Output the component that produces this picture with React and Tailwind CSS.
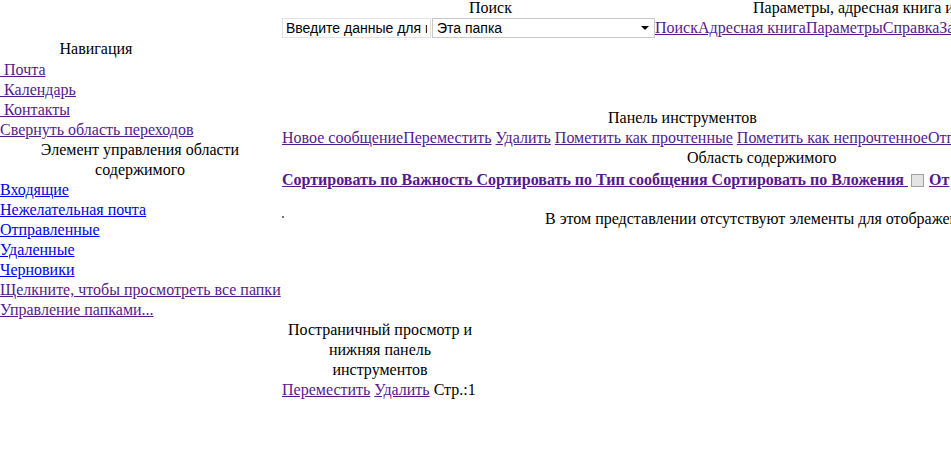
import React from 'react';

const visited = 'text-[#551a8b] underline';
const fresh = 'text-[#0000ee] underline';

function NavLink({ href = '#', cls = visited, children }) {
  return (
    <div>
      <a href={href} className={cls}>{children}</a>
    </div>
  );
}

export default function App() {
  return (
    <div className="w-[951px] h-[458px] overflow-hidden bg-white text-black font-['Liberation_Serif','Times_New_Roman',serif] text-[16px] leading-5">
      {/* Header: search and options */}
      <div className="flex whitespace-nowrap">
        <div className="w-[282px] shrink-0" />
        <div className="flex flex-col">
          <div className="flex h-[17px] leading-[16px]">
            <span className="ml-[187px]">Поиск</span>
            <span className="ml-[241px]">Параметры, адресная книга и справка</span>
          </div>
          <div className="flex items-center h-[21px]">
            <input
              type="text"
              defaultValue="Введите данные для поиска"
              className="w-[149px] h-[20px] border border-[#e3e3e3] px-[3px] font-['Liberation_Sans',Arial,sans-serif] text-[14px] text-black outline-none"
            />
            <div className="relative w-[223px] h-[20px] border border-[#c8c8c8] ml-px font-['Liberation_Sans',Arial,sans-serif] text-[14px] leading-[18px] pl-[4px]">
              Эта папка
              <span className="absolute right-[5px] top-[7px] w-0 h-0 border-l-[4px] border-r-[4px] border-t-[4px] border-l-transparent border-r-transparent border-t-black" />
            </div>
            <span>
              <a href="#" className={visited}>Поиск</a>
              <a href="#" className={visited}>Адресная книга</a>
              <a href="#" className={visited}>Параметры</a>
              <a href="#" className={visited}>Справка</a>
              <a href="#" className={visited}>Завершить сеанс</a>
            </span>
          </div>
        </div>
      </div>

      {/* Body: navigation + content */}
      <div className="flex whitespace-nowrap mt-px">
        <div className="w-[280px] mr-[2px] shrink-0">
          <div className="w-[192px]">
            <div className="text-center h-[21px]">Навигация</div>
            <NavLink>{'\u00a0'}Почта</NavLink>
            <NavLink>{'\u00a0'}Календарь</NavLink>
            <NavLink>{'\u00a0'}Контакты</NavLink>
            <NavLink>Свернуть область переходов</NavLink>
          </div>
          <div className="text-center whitespace-normal">Элемент управления области содержимого</div>
          <NavLink cls={fresh}>Входящие</NavLink>
          <NavLink cls={fresh}>Нежелательная почта</NavLink>
          <NavLink cls={fresh}>Отправленные</NavLink>
          <NavLink cls={fresh}>Удаленные</NavLink>
          <NavLink cls={fresh}>Черновики</NavLink>
          <NavLink>Щелкните, чтобы просмотреть все папки</NavLink>
          <NavLink>Управление папками...</NavLink>
        </div>

        <div className="pt-[69px]">
          <div className="pl-[326px]">Панель инструментов</div>
          <div>
            <a href="#" className={visited}>Новое сообщение</a>
            <a href="#" className={visited}>Переместить</a>{' '}
            <a href="#" className={visited}>Удалить</a>{' '}
            <a href="#" className={visited}>Пометить как прочтенные</a>{' '}
            <a href="#" className={visited}>Пометить как непрочтенное</a>
            <a href="#" className={visited}>Отправить/получить</a>
          </div>
          <div className="pl-[405px] h-[21px]">Область содержимого</div>
          <div className="flex items-center h-[22px] font-bold">
            <a href="#" className={visited}>
              Сортировать по Важность Сортировать по Тип сообщения Сортировать по Вложения{'\u00a0'}
            </a>
            <span className="inline-block w-[13px] h-[13px] ml-[3px] mr-[5px] border border-[#a0a0a0] bg-[#e4e4e4]" />
            <a href="#" className={visited}>От</a>
          </div>
          <div className="flex items-center h-5 mt-[18px]">
            <span className="w-[2px] h-[2px] bg-[#777] -mt-[4px]" />
            <span className="ml-[261px]">В этом представлении отсутствуют элементы для отображения.</span>
          </div>
        </div>
      </div>

      {/* Paging and bottom toolbar */}
      <div className="flex">
        <div className="w-[282px] shrink-0" />
        <div className="w-[196px]">
          <div className="text-center">Постраничный просмотр и нижняя панель инструментов</div>
          <div className="whitespace-nowrap">
            <a href="#" className={visited}>Переместить</a>{' '}
            <a href="#" className={visited}>Удалить</a> Стр.:1
          </div>
        </div>
      </div>
    </div>
  );
}
